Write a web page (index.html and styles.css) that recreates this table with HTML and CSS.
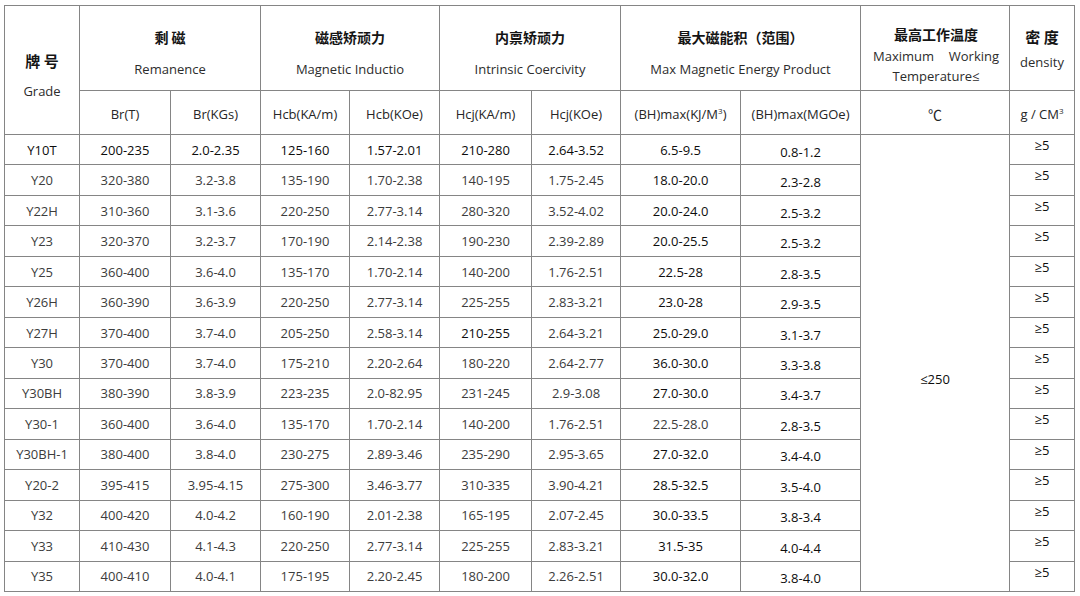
FILE: index.html
```html
<!DOCTYPE html>
<html lang="zh">
<head>
<meta charset="utf-8">
<title>Magnet Grades</title>
<link rel="stylesheet" href="styles.css">
</head>
<body>
<table class="grid">
  <colgroup>
    <col class="c-grade"><col class="c-a"><col class="c-b"><col class="c-c"><col class="c-d"><col class="c-e"><col class="c-f"><col class="c-g"><col class="c-h"><col class="c-temp"><col class="c-den">
  </colgroup>
  <thead>
    <tr class="h1">
      <th rowspan="2" class="grade-head"><div class="cn big">牌 号</div><div class="en grade-en">Grade</div></th>
      <th colspan="2"><div class="cn">剩 磁</div><div class="en">Remanence</div></th>
      <th colspan="2"><div class="cn">磁感矫顽力</div><div class="en">Magnetic Inductio</div></th>
      <th colspan="2"><div class="cn">内禀矫顽力</div><div class="en">Intrinsic Coercivity</div></th>
      <th colspan="2"><div class="cn">最大磁能积（范围）</div><div class="en">Max Magnetic Energy Product</div></th>
      <th class="temp-head"><div class="cn">最高工作温度</div><div class="en justify">Maximum Working Temperature≤</div></th>
      <th class="den-head"><div class="cn big">密 度</div><div class="en den-en">density</div></th>
    </tr>
    <tr class="h2">
      <th>Br(T)</th><th>Br(KGs)</th><th>Hcb(KA/m)</th><th>Hcb(KOe)</th><th>Hcj(KA/m)</th><th>Hcj(KOe)</th><th>(BH)max(KJ/M<sup>3</sup>)</th><th>(BH)max(MGOe)</th><th class="deg">℃</th><th>g / CM<sup>3</sup></th>
    </tr>
  </thead>
  <tbody>
    <tr class="dark"><td>Y10T</td><td>200-235</td><td>2.0-2.35</td><td>125-160</td><td>1.57-2.01</td><td>210-280</td><td>2.64-3.52</td><td class="k">6.5-9.5</td><td class="k m">0.8-1.2</td><td rowspan="15" class="temp"><span>≤250</span></td><td class="den">≥5</td></tr>
    <tr><td>Y20</td><td>320-380</td><td>3.2-3.8</td><td>135-190</td><td>1.70-2.38</td><td>140-195</td><td>1.75-2.45</td><td class="k">18.0-20.0</td><td class="k m">2.3-2.8</td><td class="den">≥5</td></tr>
    <tr><td>Y22H</td><td>310-360</td><td>3.1-3.6</td><td>220-250</td><td>2.77-3.14</td><td>280-320</td><td>3.52-4.02</td><td class="k">20.0-24.0</td><td class="k m">2.5-3.2</td><td class="den">≥5</td></tr>
    <tr><td>Y23</td><td>320-370</td><td>3.2-3.7</td><td>170-190</td><td>2.14-2.38</td><td>190-230</td><td>2.39-2.89</td><td class="k">20.0-25.5</td><td class="k m">2.5-3.2</td><td class="den">≥5</td></tr>
    <tr><td>Y25</td><td>360-400</td><td>3.6-4.0</td><td>135-170</td><td>1.70-2.14</td><td>140-200</td><td>1.76-2.51</td><td class="k">22.5-28</td><td class="k m">2.8-3.5</td><td class="den">≥5</td></tr>
    <tr><td>Y26H</td><td>360-390</td><td>3.6-3.9</td><td>220-250</td><td>2.77-3.14</td><td>225-255</td><td>2.83-3.21</td><td class="k">23.0-28</td><td class="k m">2.9-3.5</td><td class="den">≥5</td></tr>
    <tr><td>Y27H</td><td>370-400</td><td>3.7-4.0</td><td>205-250</td><td>2.58-3.14</td><td class="k">210-255</td><td>2.64-3.21</td><td class="k">25.0-29.0</td><td class="k m">3.1-3.7</td><td class="den">≥5</td></tr>
    <tr><td>Y30</td><td>370-400</td><td>3.7-4.0</td><td>175-210</td><td>2.20-2.64</td><td>180-220</td><td>2.64-2.77</td><td class="k">36.0-30.0</td><td class="k m">3.3-3.8</td><td class="den">≥5</td></tr>
    <tr><td>Y30BH</td><td>380-390</td><td>3.8-3.9</td><td>223-235</td><td>2.0-82.95</td><td>231-245</td><td>2.9-3.08</td><td class="k">27.0-30.0</td><td class="k m">3.4-3.7</td><td class="den">≥5</td></tr>
    <tr><td>Y30-1</td><td>360-400</td><td>3.6-4.0</td><td>135-170</td><td>1.70-2.14</td><td>140-200</td><td>1.76-2.51</td><td>22.5-28.0</td><td class="k m">2.8-3.5</td><td class="den">≥5</td></tr>
    <tr><td>Y30BH-1</td><td>380-400</td><td>3.8-4.0</td><td>230-275</td><td>2.89-3.46</td><td>235-290</td><td>2.95-3.65</td><td class="k">27.0-32.0</td><td class="k m">3.4-4.0</td><td class="den">≥5</td></tr>
    <tr><td>Y20-2</td><td>395-415</td><td>3.95-4.15</td><td>275-300</td><td>3.46-3.77</td><td>310-335</td><td>3.90-4.21</td><td class="k">28.5-32.5</td><td class="k m">3.5-4.0</td><td class="den">≥5</td></tr>
    <tr><td>Y32</td><td>400-420</td><td>4.0-4.2</td><td>160-190</td><td>2.01-2.38</td><td>165-195</td><td>2.07-2.45</td><td class="k">30.0-33.5</td><td class="k m">3.8-3.4</td><td class="den">≥5</td></tr>
    <tr><td>Y33</td><td>410-430</td><td>4.1-4.3</td><td>220-250</td><td>2.77-3.14</td><td>225-255</td><td>2.83-3.21</td><td class="k">31.5-35</td><td class="k m">4.0-4.4</td><td class="den">≥5</td></tr>
    <tr><td>Y35</td><td>400-410</td><td>4.0-4.1</td><td>175-195</td><td>2.20-2.45</td><td>180-200</td><td>2.26-2.51</td><td class="k">30.0-32.0</td><td class="k m">3.8-4.0</td><td class="den">≥5</td></tr>
  </tbody>
</table>
</body>
</html>
```

FILE: styles.css
```css
html, body {
  margin: 0;
  padding: 0;
  background: #ffffff;
}
body {
  padding: 5px 0 0 4px;
  font-family: "Open Sans", "Noto Sans CJK SC", sans-serif;
  color: #3c3c3c;
}
.grid {
  border-collapse: collapse;
  table-layout: fixed;
  width: 1070px;
  font-size: 13px;
}
.c-grade { width: 75px; }
.c-a { width: 91px; }
.c-b { width: 90px; }
.c-c { width: 89px; }
.c-d { width: 90px; }
.c-e { width: 92px; }
.c-f { width: 89px; }
.c-g { width: 120px; }
.c-h { width: 120px; }
.c-temp { width: 149px; }
.c-den { width: 65px; }

.grid th, .grid td {
  border: 1px solid #858585;
  text-align: center;
  padding: 0;
  font-weight: normal;
  line-height: 16px;
}
.grid th {
  color: #262626;
}
.h1 { height: 85px; }
.h2 { height: 44px; }
.h1 th { vertical-align: top; padding-top: 22px; }
.cn {
  font-family: "Noto Sans CJK SC", sans-serif;
  font-weight: bold;
  font-size: 14px;
  line-height: 18px;
  color: #141414;
}
.cn.big { font-size: 15px; }
.en { margin-top: 15px; color: #2c2c2c; }
.grade-head.grade-head { padding-top: 46px; }
.grade-en { margin-top: 13px; }
.temp-head.temp-head { padding: 19px 10px 0 12px; }
.temp-head .en { margin-top: 3px; line-height: 20px; text-align: justify; text-align-last: center; }
.temp-head .en::after { content: ""; }
.den-head .den-en { margin-top: 8px; }
.h2 th { vertical-align: middle; padding-top: 2px; }
.h2 th.deg { font-family: "Noto Sans CJK SC", sans-serif; font-size: 14px; }
sup { font-size: 8px; vertical-align: 5px; line-height: 0; }

tbody tr { height: 30.47px; }
tbody td { vertical-align: middle; padding-top: 1px; }
.dark td, td.k { color: #0d0d0d; }
td.m { padding-top: 4px; }
td.den { vertical-align: top; padding-top: 2px; color: #0d0d0d; }
td.temp { vertical-align: top; padding-top: 236px; color: #0d0d0d; }
```
